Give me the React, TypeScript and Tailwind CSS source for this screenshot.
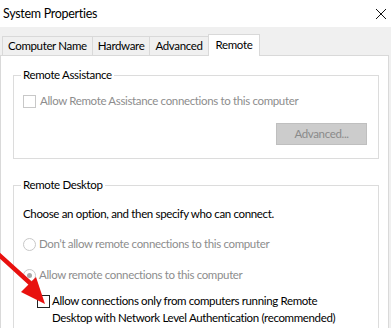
import React from 'react';

const Tab = ({ label, active }: { label: string; active?: boolean }) => (
  <div
    className={
      active
        ? 'relative z-10 -mb-px h-[22px] border border-b-0 border-[#d9d9d9] bg-white px-[7px] pt-[2px]'
        : 'h-[19px] border border-b-0 border-r-0 border-[#d9d9d9] bg-[#f0f0f0] px-[5px] pt-[1px]'
    }
  >
    {label}
  </div>
);

export default function App() {
  return (
    <div
      className="relative h-[328px] w-[391px] overflow-hidden bg-[#f0f0f0] text-[11.5px] leading-[16px] tracking-[-0.35px] text-black"
      style={{ fontFamily: 'Lato, "Liberation Sans", Arial, sans-serif' }}
    >
      {/* title bar */}
      <div className="flex h-[27px] items-center justify-between bg-white pl-[3px] pr-[3px]">
        <span className="text-[12.5px] tracking-[-0.3px]">System Properties</span>
        <svg width="12" height="12" viewBox="0 0 12 12" className="mr-[1px]">
          <path d="M1 1 L11 11 M11 1 L1 11" stroke="#111" strokeWidth="1" />
        </svg>
      </div>

      {/* tabs */}
      <div className="flex items-end pl-[2px] pt-[7px]">
        <Tab label="Computer Name" />
        <Tab label="Hardware" />
        <Tab label="Advanced" />
        <Tab label="Remote" active />
      </div>

      {/* panel */}
      <div className="mr-[2px] h-[300px] border border-[#d9d9d9] bg-white pl-[12px] pr-[9px] pt-[11px]">
        <fieldset className="h-[92px] border border-[#dcdcdc] px-[9px]">
          <legend className="-ml-[2px] px-[2px]">Remote Assistance</legend>
          <div className="mt-[10px] flex items-center gap-[4px] text-[#8d8d8d]">
            <span className="h-[13px] w-[13px] border border-[#c8c8c8] bg-white" />
            <span>Allow Remote Assistance connections to this computer</span>
          </div>
          <div className="mt-[14px] flex justify-end pr-[2px]">
            <div className="flex h-[22px] w-[91px] items-center justify-center border border-[#bfbfbf] bg-[#cccccc] text-[#8a8a8a]">
              Advanced...
            </div>
          </div>
        </fieldset>

        <fieldset className="mt-[18px] h-[160px] border border-[#dcdcdc] px-[9px]">
          <legend className="-ml-[2px] px-[2px]">Remote Desktop</legend>
          <div className="mt-[13px]">Choose an option, and then specify who can connect.</div>
          <div className="mt-[14px] flex items-center gap-[3px] text-[#8d8d8d]">
            <span className="h-[13px] w-[13px] rounded-full border border-[#c8c8c8] bg-white" />
            <span>Don’t allow remote connections to this computer</span>
          </div>
          <div className="mt-[15px] flex items-center gap-[3px] text-[#8d8d8d]">
            <span className="flex h-[13px] w-[13px] items-center justify-center rounded-full border border-[#c8c8c8] bg-white">
              <span className="h-[5px] w-[5px] rounded-full bg-[#a8a8a8]" />
            </span>
            <span>Allow remote connections to this computer</span>
          </div>
          <div className="mt-[9px] flex gap-[2px] pl-[14px]">
            <span className="mt-[3px] h-[13px] w-[13px] shrink-0 border border-[#222] bg-white" />
            <span className="leading-[17px]">
              Allow connections only from computers running Remote
              <br />
              Desktop with Network Level Authentication (recommended)
            </span>
          </div>
        </fieldset>
      </div>

      {/* red arrow annotation */}
      <svg className="pointer-events-none absolute left-0 top-0" width="391" height="328">
        <path d="M-2 254 L30 283" stroke="#e8110f" strokeWidth="4.5" strokeLinecap="round" />
        <path d="M45 304 L21 292 L36 277 Z" fill="#e8110f" />
      </svg>
    </div>
  );
}
